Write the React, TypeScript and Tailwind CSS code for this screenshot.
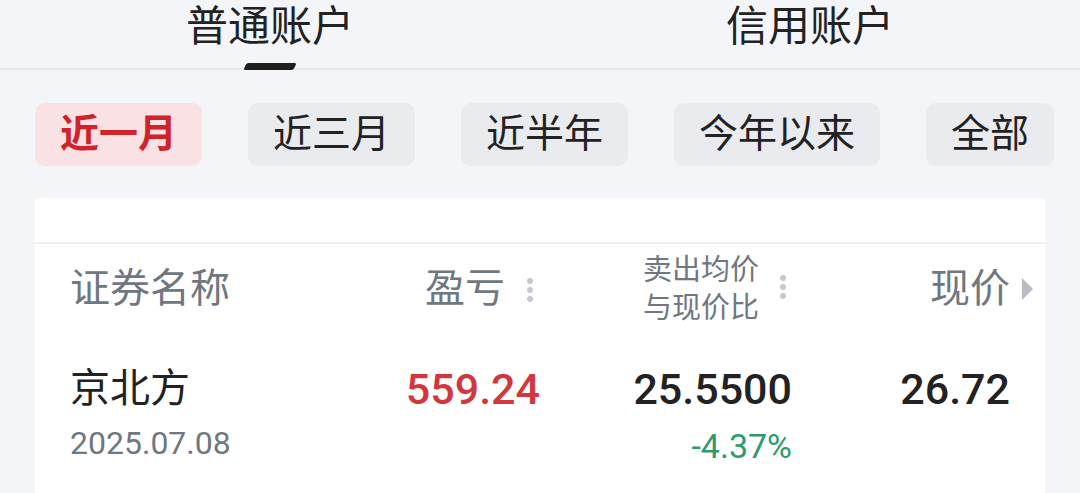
import React from 'react';

const ranges = ['近一月', '近三月', '近半年', '今年以来', '全部'];

function Dots() {
  return (
    <span className="flex flex-col items-center gap-[3px] w-[8px]">
      <span className="w-[6px] h-[6px] rounded-full bg-[#c6c9ce]" />
      <span className="w-[6px] h-[6px] rounded-full bg-[#c6c9ce]" />
      <span className="w-[6px] h-[6px] rounded-full bg-[#c6c9ce]" />
    </span>
  );
}

export default function App() {
  const active = 0;
  return (
    <div
      className="w-[1080px] h-[493px] overflow-hidden bg-[#f4f5f9] text-[#222]"
      style={{ fontFamily: "Roboto, 'Noto Sans CJK SC', sans-serif" }}
    >
      {/* account tabs */}
      <div className="flex h-[70px] border-b-2 border-[#e6e7eb]">
        <div className="relative flex-1 text-center text-[42px] leading-[54px]">
          普通账户
          <span className="absolute left-1/2 bottom-[-2px] -translate-x-1/2 w-[50px] h-[7px] rounded-[2px] bg-[#1e1e1e] skew-x-[-25deg]" />
        </div>
        <div className="relative flex-1 text-center text-[42px] leading-[54px]">信用账户</div>
      </div>

      {/* range chips */}
      <div className="flex gap-[46px] pl-[35px] mt-[33px]">
        {ranges.map((r, i) => (
          <div
            key={r}
            className={
              i === active
                ? 'h-[63px] px-[25px] rounded-[10px] bg-[#f9e1e4] text-[#cf2329] font-bold text-[39px] leading-[63px]'
                : 'h-[63px] px-[25px] rounded-[10px] bg-[#eaebef] text-[#222] text-[39px] leading-[63px]'
            }
          >
            {r}
          </div>
        ))}
      </div>

      {/* table card */}
      <div className="ml-[35px] mt-[32px] w-[1010px] bg-white">
        <div className="h-[46px] border-b-2 border-[#eeeef1]" />
        <div className="px-[35px]">
          <div className="grid grid-cols-[300px_170px_252px_218px] h-[90px] items-center text-[#6f7780]">
            <div className="text-[40px] leading-[48px]">证券名称</div>
            <div className="flex items-center justify-end pr-[6px]">
              <span className="text-[40px] leading-[48px]">盈亏</span>
              <span className="ml-[21px] mt-[2px]">
                <Dots />
              </span>
            </div>
            <div className="flex items-center justify-end pr-[5px]">
              <span className="text-[29px] leading-[38px] text-left">
                卖出均价
                <br />
                与现价比
              </span>
              <span className="ml-[20px] mt-[-4px]">
                <Dots />
              </span>
            </div>
            <div className="relative text-right text-[40px] leading-[48px]">
              现价
              <span className="absolute right-[-23px] top-1/2 -translate-y-1/2 w-0 h-0 border-y-[11px] border-y-transparent border-l-[11px] border-l-[#b9bdc3]" />
            </div>
          </div>

          <div className="grid grid-cols-[300px_170px_252px_218px] pt-[31px] pb-[30px]">
            <div>
              <div className="text-[40px] leading-[48px] text-[#222]">京北方</div>
              <div className="mt-[13px] text-[32px] leading-[34px] text-[#6f7780]">2025.07.08</div>
            </div>
            <div className="text-right text-[43px] leading-[48px] font-medium text-[#d3373d]">559.24</div>
            <div className="text-right">
              <div className="text-[43px] leading-[48px] font-medium text-[#222]">25.5500</div>
              <div className="mt-[16px] text-[34px] leading-[34px] text-[#2f9a6b]">-4.37%</div>
            </div>
            <div className="text-right text-[43px] leading-[48px] font-medium text-[#222]">26.72</div>
          </div>
        </div>
      </div>
    </div>
  );
}
